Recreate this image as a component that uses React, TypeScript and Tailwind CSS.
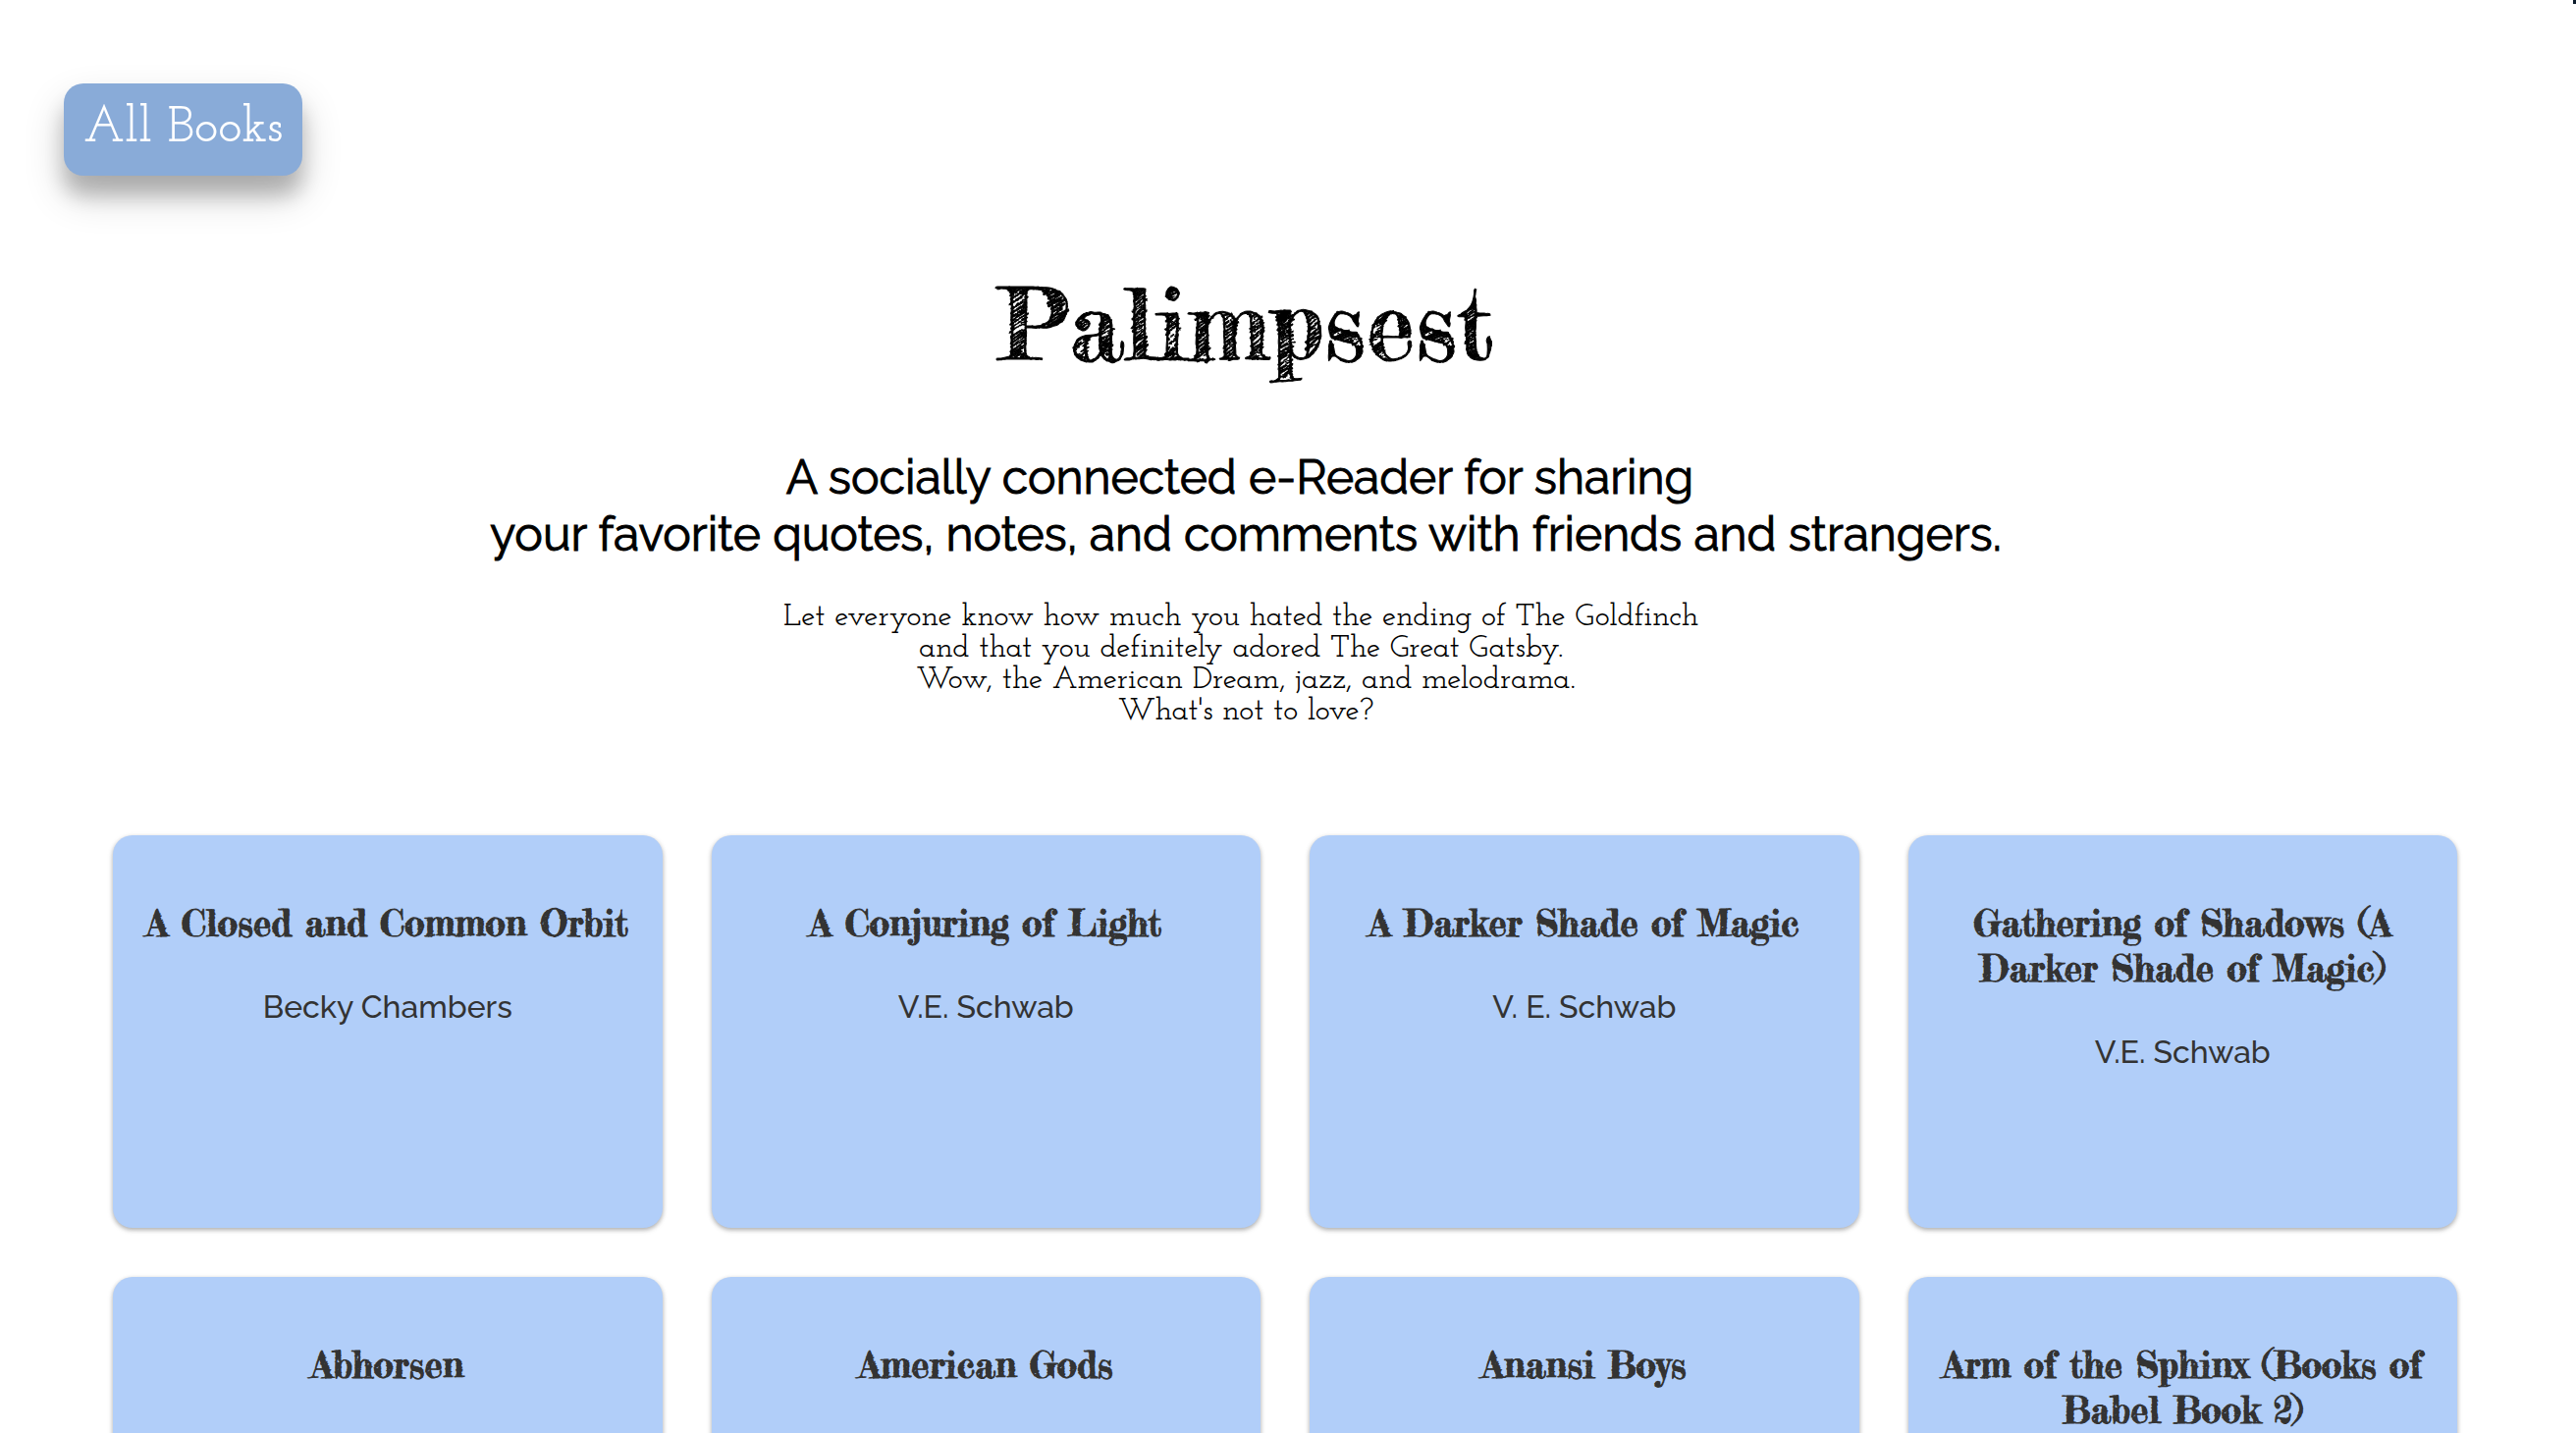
type Book = { title: string; author?: string };

const books: Book[] = [
  { title: 'A Closed and Common Orbit', author: 'Becky Chambers' },
  { title: 'A Conjuring of Light', author: 'V.E. Schwab' },
  { title: 'A Darker Shade of Magic', author: 'V. E. Schwab' },
  { title: 'Gathering of Shadows (A Darker Shade of Magic)', author: 'V.E. Schwab' },
  { title: 'Abhorsen' },
  { title: 'American Gods' },
  { title: 'Anansi Boys' },
  { title: 'Arm of the Sphinx (Books of Babel Book 2)' },
];

function BookCard({ title, author }: Book) {
  return (
    <a
      href="#book"
      className="block min-h-[400px] rounded-[20px] bg-[#b1cef9] px-7 pt-[67px] pb-10 text-center text-[#333333] shadow-[0_2px_6px_rgba(0,0,0,0.12),0_2px_4px_rgba(0,0,0,0.24)]"
    >
      <h3 className="font-['Fredericka_the_Great','Liberation_Serif',serif] text-[37px] leading-[46px] font-normal [-webkit-text-stroke:1px_#333333]">
        {title}
      </h3>
      {author && (
        <p className="mt-[42px] font-[Raleway,Lato,sans-serif] text-[32px] leading-10 font-medium">{author}</p>
      )}
    </a>
  );
}

export default function App() {
  return (
    <div className="relative h-screen overflow-hidden bg-white text-black">
      <span className="absolute top-0 right-0 h-1 w-[3px] bg-[#0b1b2b]" />
      <nav className="px-[65px] pt-[85px]">
        <button
          type="button"
          className="block rounded-[20px] bg-[#89abd8] px-5 pt-4 pb-[18px] font-['Josefin_Slab','Liberation_Serif',serif] text-[52px] leading-[60px] font-medium text-white shadow-[0_20px_40px_rgba(0,0,0,0.19),0_20px_20px_rgba(0,0,0,0.2)]"
        >
          All Books
        </button>
      </nav>
      <header className="mt-[97px] pr-[86px] text-center">
        <h1 className="font-['Fredericka_the_Great','Liberation_Serif',serif] text-[100px] leading-[110px] font-normal [-webkit-text-stroke:1px_#000000]">
          Palimpsest
        </h1>
        <h2 className="mt-[71px] font-[Raleway,Lato,sans-serif] text-[48px] leading-[58px] font-normal [-webkit-text-stroke:1px_#000000]">
          A socially connected e-Reader for sharing&nbsp;
          <br />
          your favorite quotes, notes, and comments with friends and strangers.
        </h2>
        <p className="mt-10 font-['Josefin_Slab','Liberation_Serif',serif] text-[32px] leading-8 font-medium">
          Let everyone know how much you hated the ending of The Goldfinch&nbsp;
          <br />
          and that you definitely adored The Great Gatsby.&nbsp;
          <br />
          Wow, the American Dream, jazz, and melodrama.
          <br />
          What's not to love?
        </p>
      </header>
      <main className="mt-[110px] grid grid-cols-4 gap-[50px] pr-[121px] pl-[115px]">
        {books.map((book) => (
          <BookCard key={book.title} {...book} />
        ))}
      </main>
    </div>
  );
}
